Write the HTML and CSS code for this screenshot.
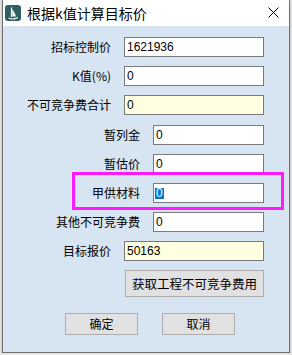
FILE: index.html
```html
<!DOCTYPE html>
<html lang="zh-CN">
<head>
  <meta charset="UTF-8" />
  <title>根据k值计算目标价</title>
  <link rel="stylesheet" href="styles.css">
</head>
<body>
  <div class="window">
    <div class="titlebar">
      <svg class="app-icon" width="16" height="16" viewBox="0 0 16 16">
        <rect x="0" y="0" width="16" height="16" rx="3" fill="#2f5f60"/>
        <path d="M6.5 2.5 L6.5 12" stroke="#fff" stroke-width="1.2" fill="none"/>
        <path d="M7.3 4 C9 6.5 10.5 9 10.8 11.5 L7.3 11.5 Z" fill="#fff"/>
        <path d="M3.5 13 C6 14.2 10 14.2 12.8 12.6" stroke="#fff" stroke-width="1.1" fill="none"/>
      </svg>
      <span class="title">根据k值计算目标价</span>
      <svg class="close" width="11" height="11" viewBox="0 0 11 11">
        <path d="M0.5 0.5 L10.5 10.5 M10.5 0.5 L0.5 10.5" stroke="#000" stroke-width="1"/>
      </svg>
    </div>

    <div class="content">
      <div class="row">
        <span class="label">招标控制价</span>
        <div class="field wide">1621936</div>
      </div>
      <div class="row">
        <span class="label">K值(%)</span>
        <div class="field wide">0</div>
      </div>
      <div class="row row-gap">
        <span class="label">不可竞争费合计</span>
        <div class="field wide readonly">0</div>
      </div>
      <div class="row">
        <span class="label">暂列金</span>
        <div class="field narrow">0</div>
      </div>
      <div class="row">
        <span class="label">暂估价</span>
        <div class="field narrow">0</div>
      </div>
      <div class="row">
        <div class="highlight"></div>
        <span class="label">甲供材料</span>
        <div class="field narrow"><span class="selected">0</span></div>
      </div>
      <div class="row">
        <span class="label">其他不可竞争费</span>
        <div class="field narrow">0</div>
      </div>
      <div class="row">
        <span class="label">目标报价</span>
        <div class="field wide readonly">50163</div>
      </div>

      <div class="fetch-row">
        <button class="btn fetch">获取工程不可竞争费用</button>
      </div>

      <div class="actions">
        <button class="btn">确定</button>
        <button class="btn">取消</button>
      </div>
    </div>
  </div>
</body>
</html>
```

FILE: styles.css
```css
body {
  margin: 0;
  background: #e4e4e4;
  font-family: "Noto Sans CJK SC", "Noto Sans", sans-serif;
  font-size: 12px;
  color: #000;
}

.window {
  margin-left: 2px;
  width: 286px;
  height: 352px;
  border: 1px solid #707070;
  border-top: none;
  background: #d7e4f2;
  box-shadow: 0 1px 2px rgba(0, 0, 0, 0.25);
}

.titlebar {
  height: 26px;
  background: #fff;
  display: flex;
  align-items: center;
  padding-left: 2px;
  position: relative;
}

.app-icon {
  flex: none;
}

.title {
  margin-left: 6px;
  font-size: 14px;
  line-height: 26px;
  margin-top: -1px;
}

.close {
  margin-left: auto;
  margin-right: 10px;
  margin-top: -2px;
}

.content {
  padding: 11px 25px 0 0;
}

.row {
  position: relative;
  display: flex;
  justify-content: flex-end;
  align-items: center;
  gap: 13px;
  height: 20px;
  margin-bottom: 9px;
}

.row.row-gap {
  margin-bottom: 10px;
}

.label {
  line-height: 20px;
  white-space: nowrap;
}

.field {
  box-sizing: border-box;
  height: 20px;
  border: 1px solid #7a7a7a;
  background: #fff;
  padding: 0 2px;
  font-family: "Liberation Sans", Arial, sans-serif;
  font-size: 12px;
  line-height: 18px;
}

.field.wide {
  width: 140px;
}

.field.narrow {
  width: 111px;
}

.field.readonly {
  background: #ffffe1;
}

.selected {
  display: inline-block;
  background: #0078d7;
  color: #fff;
  line-height: 11px;
  padding: 0 1px;
  margin-left: -1px;
}

.highlight {
  position: absolute;
  left: 69px;
  right: -20px;
  top: -11px;
  bottom: -7px;
  border: 3px solid #ff1bff;
  pointer-events: none;
}

.fetch-row {
  display: flex;
  justify-content: flex-end;
  margin-top: 8px;
}

.btn {
  font-family: "Noto Sans CJK SC", "Noto Sans", sans-serif;
  font-size: 12px;
  background: #e1e1e1;
  border: 1px solid #adadad;
  color: #000;
  height: 22px;
  width: 73px;
  padding: 0;
  line-height: 20px;
}

.btn.fetch {
  width: 139px;
  height: 27px;
  font-size: 12.5px;
}

.actions {
  display: flex;
  gap: 24px;
  margin-top: 16px;
  padding-left: 62px;
}
```
